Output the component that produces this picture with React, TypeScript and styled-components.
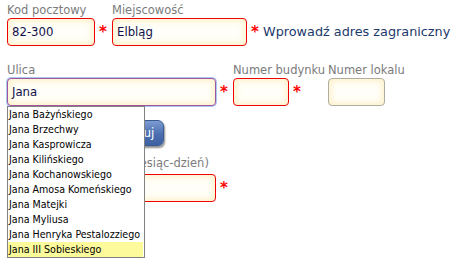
import styled, { createGlobalStyle } from "styled-components";

const GlobalStyle = createGlobalStyle`
  html, body {
    margin: 0;
    background: #fff;
  }
  body {
    font-family: "DejaVu Sans", Verdana, sans-serif;
  }
`;

const Form = styled.div`
  position: relative;
  padding: 3px 7px 0 7px;
  width: 462px;
  height: 262px;
  box-sizing: border-box;
  overflow: hidden;
`;

const Row = styled.div<{ $top?: number }>`
  display: flex;
  align-items: flex-end;
  margin-top: ${(p) => p.$top ?? 0}px;
`;

const Field = styled.div<{ $width?: number }>`
  position: relative;
  display: flex;
  flex-direction: column;
  width: ${(p) => (p.$width ? `${p.$width}px` : "auto")};
`;

const Label = styled.label<{ $pad?: number }>`
  font-size: 11.5px;
  line-height: 15px;
  height: 15px;
  padding-bottom: ${(p) => p.$pad ?? 0}px;
  color: #7b7b7b;
  white-space: nowrap;
`;

const InputLine = styled.div`
  display: flex;
  align-items: center;
`;

type Tone = "error" | "focus" | "plain";

const Input = styled.div<{ $width: number; $tone?: Tone }>`
  box-sizing: border-box;
  width: ${(p) => p.$width}px;
  height: 28px;
  border-radius: 4px;
  border: 1px solid
    ${(p) =>
      p.$tone === "focus" ? "#a2559b" : p.$tone === "plain" ? "#b0aca0" : "#f00000"};
  box-shadow: ${(p) =>
    p.$tone === "focus"
      ? "0 0 0 1px #a9c8f4, inset 0 0 6px 2px #fdf1c8"
      : "inset 0 0 6px 2px #fdf1c8"};
  background: #fffef8;
  font-family: "DejaVu Sans Condensed", Tahoma, sans-serif;
  font-size: 13px;
  line-height: 26px;
  padding-left: 4px;
  color: #10104a;
`;

const Star = styled.span<{ $hidden?: boolean }>`
  width: 17px;
  padding-left: 4px;
  box-sizing: border-box;
  color: #ff0000;
  font-size: 15px;
  font-weight: bold;
  line-height: 14px;
  visibility: ${(p) => (p.$hidden ? "hidden" : "visible")};
`;

const Hint = styled.span`
  font-size: 12.8px;
  color: #1c3a6c;
  line-height: 28px;
  margin-left: -1px;
  white-space: nowrap;
`;

const Button = styled.button`
  margin-left: 82px;
  width: 75px;
  height: 26px;
  border: 1px solid #3a5a94;
  border-radius: 6px;
  background: linear-gradient(#7c9bd0, #4b6fb0 55%, #3d61a3);
  box-shadow: 1px 2px 2px rgba(0, 0, 0, 0.45);
  color: #fff;
  font-family: "DejaVu Sans", Verdana, sans-serif;
  font-size: 12px;
  padding: 0;
`;

const Dropdown = styled.ul`
  position: absolute;
  left: 0;
  top: 43px;
  z-index: 2;
  margin: 0;
  padding: 0;
  list-style: none;
  width: 138px;
  box-sizing: border-box;
  border: 1px solid #828282;
  background: #fff;
`;

const Option = styled.li<{ $active?: boolean }>`
  height: 15px;
  line-height: 15px;
  padding-left: 1px;
  margin-right: 1px;
  font-family: "DejaVu Sans Condensed", Tahoma, sans-serif;
  font-size: 10.6px;
  color: #000;
  white-space: nowrap;
  overflow: hidden;
  background: ${(p) => (p.$active ? "#fdfa9c" : "transparent")};
`;

const streets = [
  "Jana Bażyńskiego",
  "Jana Brzechwy",
  "Jana Kasprowicza",
  "Jana Kilińskiego",
  "Jana Kochanowskiego",
  "Jana Amosa Komeńskiego",
  "Jana Matejki",
  "Jana Myliusa",
  "Jana Henryka Pestalozziego",
  "Jana III Sobieskiego",
];

export default function App() {
  return (
    <>
      <GlobalStyle />
      <Form>
        <Row>
          <Field>
            <Label>Kod pocztowy</Label>
            <InputLine>
              <Input $width={88}>82-300</Input>
              <Star>*</Star>
            </InputLine>
          </Field>
          <Field>
            <Label>Miejscowość</Label>
            <InputLine>
              <Input $width={135}>Elbląg</Input>
              <Star>*</Star>
            </InputLine>
          </Field>
          <Hint>Wprowadź adres zagraniczny</Hint>
        </Row>

        <Row $top={17}>
          <Field>
            <Label>Ulica</Label>
            <InputLine>
              <Input $width={209} $tone="focus">Jana</Input>
              <Star>*</Star>
            </InputLine>
            <Dropdown>
              {streets.map((s, i) => (
                <Option key={s} $active={i === streets.length - 1}>
                  {s}
                </Option>
              ))}
            </Dropdown>
          </Field>
          <Field $width={95}>
            <Label>Numer budynku</Label>
            <InputLine>
              <Input $width={56} />
              <Star>*</Star>
            </InputLine>
          </Field>
          <Field>
            <Label>Numer lokalu</Label>
            <InputLine>
              <Input $width={57} $tone="plain" />
              <Star $hidden>*</Star>
            </InputLine>
          </Field>
        </Row>

        <Row $top={14}>
          <Button>Weryfikuj</Button>
        </Row>

        <Row $top={10}>
          <Field>
            <Label $pad={3}>Data urodzenia (rok-miesiąc-dzień)</Label>
            <InputLine>
              <Input $width={209} />
              <Star>*</Star>
            </InputLine>
          </Field>
        </Row>
      </Form>
    </>
  );
}
